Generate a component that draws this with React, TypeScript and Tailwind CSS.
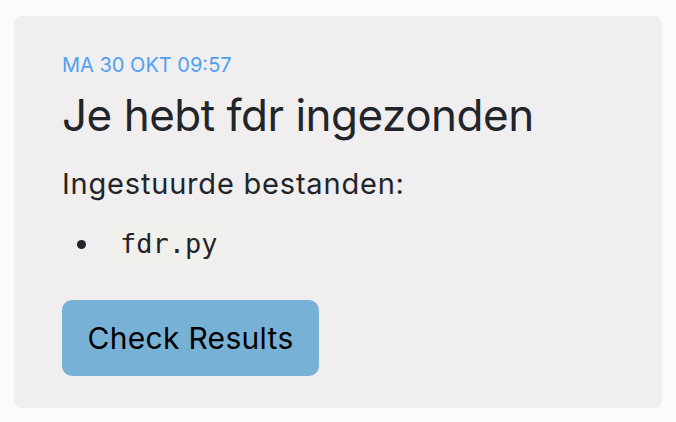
export default function App() {
  return (
    <div className="min-h-screen bg-[#fcfbfa] pt-[16px] px-[14px]" style={{ fontFamily: 'Inter, "Noto Sans", sans-serif' }}>
      <div className="w-[648px] rounded-[8px] bg-[#f0eeef] pt-[37px] pb-[32px] px-[48px]">
        <div className="text-[20px] leading-[24px] text-[#4ea1f2] uppercase">Ma 30 okt 09:57</div>
        <h1 className="mt-[10px] text-[44px] leading-[56px] tracking-[-0.5px] text-[#212529]">Je hebt fdr ingezonden</h1>
        <p className="mt-[24px] text-[29px] leading-[34px] tracking-[0.8px] text-[#212529]">Ingestuurde bestanden:</p>
        <ul className="mt-[19px] flex flex-col">
          <li className="flex items-center">
            <span className="ml-[15px] h-[9px] w-[9px] rounded-full bg-[#212529]" />
            <code
              className="ml-[24px] h-[48px] px-[10px] flex items-center bg-[#f2f0ec] text-[27px] text-[#212529]"
              style={{ fontFamily: '"DejaVu Sans Mono", monospace' }}
            >
              fdr.py
            </code>
          </li>
        </ul>
        <button className="mt-[32px] h-[76px] w-[257px] rounded-[10px] bg-[#78b1d6] text-[30px] tracking-[0.3px] text-black">
          Check Results
        </button>
      </div>
    </div>
  )
}
